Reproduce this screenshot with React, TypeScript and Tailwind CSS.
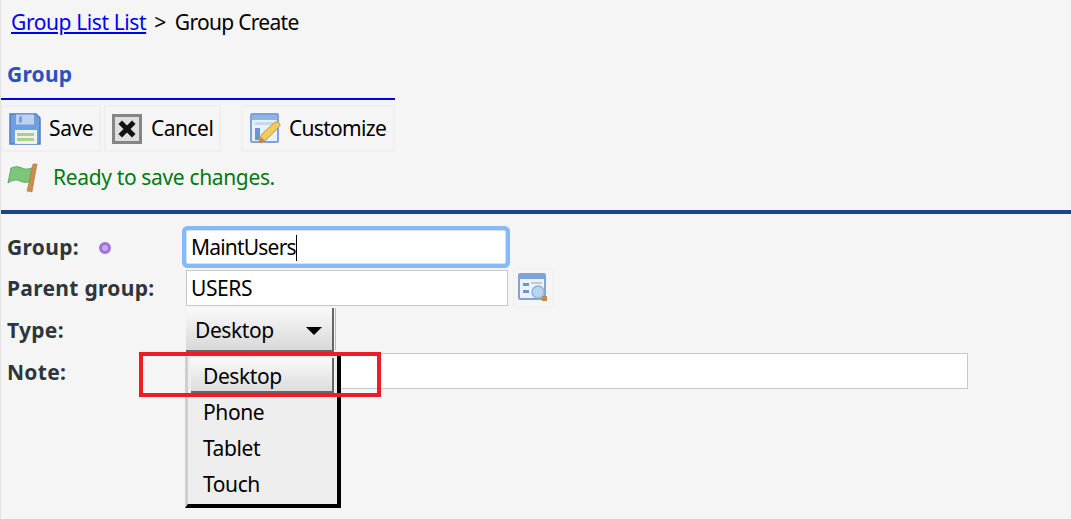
const font = "[font-family:'Noto_Sans',sans-serif]";

function SaveIcon() {
  return (
    <svg width="32" height="32" viewBox="0 0 32 32">
      <path d="M1 1 H27 L31 5 V31 H1 Z" fill="#6f9fe0" stroke="#4f7fbc" strokeWidth="1.5" />
      <rect x="7" y="1.5" width="18" height="10" fill="#bcd2ef" />
      <rect x="10" y="3.5" width="3" height="6" fill="#6f9fe0" />
      <rect x="6" y="17" width="22" height="14" fill="#eef2ee" />
      <rect x="8" y="20" width="17" height="3" fill="#a9d08e" />
      <rect x="8" y="25" width="17" height="3" fill="#a9d08e" />
    </svg>
  );
}

function CancelIcon() {
  return (
    <svg width="30" height="30" viewBox="0 0 30 30">
      <rect x="1.5" y="1.5" width="27" height="27" fill="#dedede" stroke="#858585" strokeWidth="3" />
      <path d="M10 10 L20 20 M20 10 L10 20" stroke="#111" strokeWidth="5" strokeLinecap="square" />
    </svg>
  );
}

function CustomizeIcon() {
  return (
    <svg width="31" height="31" viewBox="0 0 31 31">
      <rect x="1" y="1" width="27" height="28" rx="1" fill="#e8f0fa" stroke="#7fa3d6" strokeWidth="2" />
      <rect x="2" y="2" width="25" height="5" fill="#8fb3e3" />
      <rect x="5" y="15" width="5" height="12" fill="#6d95cf" />
      <rect x="5" y="9" width="18" height="3" fill="#c8d9ee" />
      <path d="M9 27 L12 21 L25 9 Q28 8 30 11 Q30 13 29 14 L16 27 L10 30 Z" fill="#f0cc5c" stroke="#c8963c" strokeWidth="1" />
      <path d="M9 30 L11 24 L15 28 Z" fill="#c8843c" />
    </svg>
  );
}

function FlagIcon() {
  return (
    <svg width="31" height="30" viewBox="0 0 31 30">
      <path d="M4 5 Q10 2 15 5 T29 3 L24 18 Q18 21 13 18 T1 20 Z" fill="#7cc67c" stroke="#62ad62" />
      <path d="M26 1 L30 1 L25 29 L20 28 Z" fill="#c98d4e" stroke="#a06a30" strokeWidth="0.5" />
    </svg>
  );
}

function LookupIcon() {
  return (
    <svg width="30" height="30" viewBox="0 0 30 30">
      <rect x="1" y="1" width="26" height="25" rx="1" fill="#eef3f9" stroke="#7fa3d6" strokeWidth="2" />
      <rect x="2" y="2" width="24" height="4" fill="#7fa3d6" />
      <rect x="5" y="10" width="6" height="3" fill="#6d95cf" />
      <rect x="5" y="17" width="6" height="3" fill="#6d95cf" />
      <rect x="13" y="9" width="11" height="2" fill="#c9c9c9" />
      <circle cx="20" cy="19" r="6" fill="#b8d4f0" stroke="#8fb3e3" strokeWidth="1.5" />
      <rect x="24" y="23" width="5" height="5" fill="#c8864a" />
    </svg>
  );
}

function ToolButton({ icon, label, className }: { icon: React.ReactNode; label: string; className: string }) {
  return (
    <div className={`flex h-[47px] items-center border-2 border-[#efefef] text-[21px] text-black ${className}`}>
      {icon}
      <span>{label}</span>
    </div>
  );
}

export default function App() {
  return (
    <div className={`relative h-[519px] w-[1071px] overflow-hidden border-l border-[#e4e4e4] bg-[#f5f5f5] ${font}`}>
      <div className="flex h-[46px] items-center pl-[10px] text-[21px] tracking-[-0.4px] text-black">
        <a className="text-[#0000ee] underline">Group List List</a>
        <span className="ml-2">&gt;</span>
        <span className="ml-[9px] tracking-[-0.7px]">Group Create</span>
      </div>
      <div className="flex h-[54px] w-[394px] items-center border-b-2 border-[#0000ee] pl-[6px] pt-[6px] text-[21px] font-bold tracking-[0.2px] text-[#2a50c0]">
        Group
      </div>
      <div className="mt-[5px] flex w-[394px]">
        <ToolButton icon={<SaveIcon />} label="Save" className="w-[100px] gap-[8px] pl-[6px] tracking-[-0.4px]" />
        <ToolButton icon={<CancelIcon />} label="Cancel" className="ml-[3px] w-[117px] gap-[9px] pl-[6px] tracking-[-0.5px]" />
        <ToolButton icon={<CustomizeIcon />} label="Customize" className="ml-[20px] w-[154px] gap-[8px] pl-[7px] tracking-[-0.7px]" />
      </div>
      <div className="mt-[9px] flex h-[34px] items-center pl-[6px]">
        <FlagIcon />
        <span className="ml-[15px] text-[21px] tracking-[-0.35px] text-[#007a10]">Ready to save changes.</span>
      </div>
      <div className="mt-[15px] h-[4px] bg-[#1c4587]" />

      <div className="mt-[14px] flex h-[37px] items-center">
        <span className="flex w-[185px] shrink-0 items-center pl-[6px] pt-[2px] text-[21px] font-bold tracking-[0.3px] text-[#2f363b]">
          Group:
          <span className="ml-[20px] h-[12px] w-[12px] rounded-full border-[3px] border-[#a070e0] bg-[#c8a8f0]" />
        </span>
        <div className="flex h-[34px] w-[320px] items-center rounded-[2px] border border-[#cfe2fb] bg-white pl-[4px] pt-[2px] text-[21px] tracking-[-0.8px] text-black shadow-[0_0_0_4px_#86b9f7]">
          MaintUsers
          <span className="h-[26px] w-px bg-black" />
        </div>
      </div>
      <div className="mt-[4px] flex h-[37px] items-center">
        <span className="w-[178px] shrink-0 pl-[6px] pt-[2px] text-[21px] font-bold tracking-[0.3px] text-[#2f363b]">
          Parent group:
        </span>
        <div className="ml-[7px] flex h-[36px] w-[322px] items-center border border-[#c8c8c8] bg-white pl-[4px] pt-[2px] text-[21px] tracking-[-0.4px] text-black">
          USERS
        </div>
        <div className="ml-[5px] flex h-[40px] w-[40px] items-center justify-center border border-[#efefef]">
          <LookupIcon />
        </div>
      </div>
      <div className="mt-[2px] flex h-[44px] items-start">
        <span className="w-[178px] shrink-0 pl-[6px] pt-[7px] text-[21px] font-bold tracking-[0.3px] text-[#2f363b]">
          Type:
        </span>
        <div className="ml-[7px] flex h-[44px] w-[148px] items-center justify-between border-r-2 border-b-2 border-[#666] bg-gradient-to-b from-[#fafafa] to-[#d8d8d8] pl-[9px] pr-[10px] pt-[4px] text-[21px] tracking-[-0.4px] text-black">
          Desktop
          <span className="h-0 w-0 border-x-[8px] border-t-[8px] border-x-transparent border-t-black" />
        </div>
        <div className="ml-[1px] h-[42px] w-px bg-[#bdbdbd]" />
      </div>
      <div className="mt-[1px] flex h-[37px] items-start">
        <span className="w-[185px] shrink-0 pl-[6px] pt-[4px] text-[21px] font-bold tracking-[0.3px] text-[#2f363b]">
          Note:
        </span>
        <div className="h-[36px] w-[782px] border border-[#c8c8c8] bg-white" />
      </div>

      <div className="absolute left-[184px] top-[355px] h-[153px] w-[156px] border-b-4 border-l-[3px] border-r-4 border-b-black border-l-[#cfcfcf] border-r-black bg-[#eeeeee] text-[21px] tracking-[-0.4px] text-black">
        <div className="ml-[3px] mt-[3px] flex h-[35px] w-[143px] items-center border-r-2 border-b-2 border-[#666] bg-gradient-to-b from-[#fafafa] to-[#dcdcdc] pl-[12px] pt-[5px]">
          Desktop
        </div>
        <div className="flex h-[36px] items-center pl-[15px] pt-[3px]">Phone</div>
        <div className="flex h-[36px] items-center pl-[15px] pt-[3px]">Tablet</div>
        <div className="flex h-[36px] items-center pl-[15px] pt-[3px]">Touch</div>
      </div>
      <div className="absolute left-[138px] top-[352px] h-[45px] w-[242px] border-[4px] border-[#ee1c25]" />
    </div>
  );
}
